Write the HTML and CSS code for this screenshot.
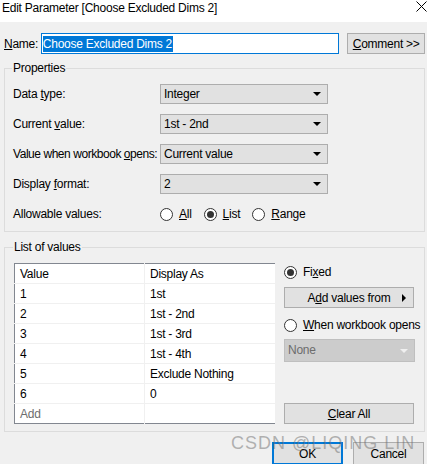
FILE: index.html
```html
<!DOCTYPE html>
<html lang="en">
<head>
    <meta charset="UTF-8">
    <title>Edit Parameter</title>
    <link rel="stylesheet" href="styles.css">
</head>
<body>
    <div class="titlebar">
        <span class="title">Edit Parameter [Choose Excluded Dims 2]</span>
        <svg class="close" width="11" height="11" viewBox="0 0 11 11">
            <path d="M0.5 0.5L10.5 10.5M10.5 0.5L0.5 10.5" stroke="#000" stroke-width="1" fill="none"/>
        </svg>
    </div>

    <div class="content">
        <div class="name-row">
            <span class="name-label"><u>N</u>ame:</span>
            <div class="name-input"><span class="selected">Choose Excluded Dims 2</span></div>
            <button class="btn comment"><u>C</u>omment &gt;&gt;</button>
        </div>

        <fieldset class="group properties">
            <legend>Properties</legend>
            <div class="prop-row">
                <span class="prop-label">Data <u>t</u>ype:</span>
                <div class="select">Integer<span class="arrow"></span></div>
            </div>
            <div class="prop-row">
                <span class="prop-label">Current <u>v</u>alue:</span>
                <div class="select">1st - 2nd<span class="arrow"></span></div>
            </div>
            <div class="prop-row">
                <span class="prop-label tight">Value when workbook <u>o</u>pens:</span>
                <div class="select">Current value<span class="arrow"></span></div>
            </div>
            <div class="prop-row">
                <span class="prop-label">Display <u>f</u>ormat:</span>
                <div class="select">2<span class="arrow"></span></div>
            </div>
            <div class="prop-row">
                <span class="prop-label">Allowable values:</span>
                <div class="radios">
                    <span class="radio"><span class="circle"></span><u>A</u>ll</span>
                    <span class="radio"><span class="circle checked"></span><u>L</u>ist</span>
                    <span class="radio"><span class="circle"></span><u>R</u>ange</span>
                </div>
            </div>
        </fieldset>

        <fieldset class="group values">
            <legend>List of values</legend>
            <div class="values-body">
                <table class="value-table">
                    <tr><td>Value</td><td>Display As</td></tr>
                    <tr><td>1</td><td>1st</td></tr>
                    <tr><td>2</td><td>1st - 2nd</td></tr>
                    <tr><td>3</td><td>1st - 3rd</td></tr>
                    <tr><td>4</td><td>1st - 4th</td></tr>
                    <tr><td>5</td><td>Exclude Nothing</td></tr>
                    <tr><td>6</td><td>0</td></tr>
                    <tr><td class="add">Add</td><td></td></tr>
                </table>
                <div class="side">
                    <span class="radio side-radio"><span class="circle checked"></span>Fi<u>x</u>ed</span>
                    <button class="btn add-from">A<u>d</u>d values from<span class="tri"></span></button>
                    <span class="radio side-radio when"><span class="circle"></span><u>W</u>hen workbook opens</span>
                    <div class="select disabled">None<span class="arrow"></span></div>
                    <button class="btn clear"><u>C</u>lear All</button>
                </div>
            </div>
        </fieldset>

        <div class="footer">
            <button class="btn ok">OK</button>
            <button class="btn cancel">Cancel</button>
            <span class="watermark">CSDN @LIQING LIN</span>
        </div>
    </div>
</body>
</html>
```

FILE: styles.css
```css
body {
    margin: 0;
    font-family: 'Liberation Sans', Arial, sans-serif;
    font-size: 12px;
    letter-spacing: -0.25px;
    color: #000;
    background-color: #f0f0f0;
    overflow: hidden;
}

.titlebar {
    position: relative;
    height: 22px;
    background: white;
    padding: 0 2px;
}

.title {
    line-height: 16px;
}

.close {
    position: absolute;
    right: 0;
    top: 1px;
}

.content {
    padding: 11px 2px 0 4px;
}

.btn {
    font-family: inherit;
    font-size: inherit;
    letter-spacing: inherit;
    background: #e1e1e1;
    border: 1px solid #adadad;
    padding: 0;
    color: #000;
}

/* name row */
.name-row {
    display: flex;
    align-items: center;
    height: 21px;
}

.name-label {
    width: 37px;
}

.name-input {
    width: 297px;
    height: 19px;
    border: 1px solid #0078d7;
    background: white;
    display: flex;
    align-items: center;
    padding-left: 1px;
}

.selected {
    background: #0078d7;
    color: white;
    line-height: 16px;
    padding-right: 1px;
}

.comment {
    margin-left: 8px;
    width: 78px;
    height: 21px;
}

/* group boxes */
.group {
    border: 1px solid #dcdcdc;
    margin: 6px 0 0 0;
    min-width: 0;
}

.group legend {
    padding: 0 1px;
    margin-left: -1px;
    line-height: 16px;
}

.properties {
    padding: 8px 0 7px 8px;
}

.prop-row {
    display: flex;
    align-items: center;
    height: 20px;
    margin-bottom: 10px;
}

.prop-row:last-child {
    margin-bottom: 0;
}

.prop-label {
    width: 147px;
    flex-shrink: 0;
    white-space: nowrap;
}

.prop-label.tight {
    letter-spacing: -0.45px;
}

.select {
    position: relative;
    width: 163px;
    height: 18px;
    line-height: 18px;
    padding-left: 3px;
    background: #e1e1e1;
    border: 1px solid #adadad;
}

.arrow {
    position: absolute;
    right: 6px;
    top: 7px;
    border-left: 4px solid transparent;
    border-right: 4px solid transparent;
    border-top: 4px solid #000;
}

.radios {
    display: flex;
}

.radio {
    display: flex;
    align-items: center;
    margin-right: 12px;
    white-space: nowrap;
}

.circle {
    flex-shrink: 0;
    width: 11px;
    height: 11px;
    border: 1px solid #333;
    border-radius: 50%;
    background: white;
    margin-right: 6px;
    position: relative;
}

.circle.checked::after {
    content: '';
    position: absolute;
    left: 2px;
    top: 2px;
    width: 7px;
    height: 7px;
    border-radius: 50%;
    background: #333;
}

/* list of values */
.values {
    margin-top: 7px;
    padding: 8px 10px 7px 9px;
}

.values-body {
    display: flex;
    gap: 8px;
}

.value-table {
    width: 263px;
    border: 1px solid #828790;
    border-collapse: collapse;
    background: white;
}

.value-table td {
    height: 18px;
    padding: 1px 0 0 5px;
    border-bottom: 1px solid #f0f0f0;
    border-right: 1px solid #f0f0f0;
}

.value-table td:first-child {
    width: 124px;
}

.value-table tr:last-child td {
    border-bottom: none;
}

.value-table .add {
    color: #6d6d6d;
}

.side {
    width: 130px;
    display: flex;
    flex-direction: column;
}

.side-radio {
    height: 18px;
    margin: 0;
}

.add-from {
    position: relative;
    margin-top: 6px;
    height: 21px;
}

.tri {
    position: absolute;
    right: 7px;
    top: 6px;
    border-top: 4px solid transparent;
    border-bottom: 4px solid transparent;
    border-left: 4px solid #000;
}

.when {
    margin-top: 8px;
}

.select.disabled {
    margin-top: 5px;
    width: 126px;
    height: 21px;
    line-height: 21px;
    background: #cccccc;
    border-color: #bfbfbf;
    color: #6d6d6d;
}

.select.disabled .arrow {
    top: 9px;
    border-top-color: #f0f0f0;
}

.clear {
    margin-top: auto;
    height: 21px;
}

/* footer buttons */
.footer {
    position: relative;
    display: flex;
    justify-content: flex-end;
    gap: 10px;
    margin-top: 10px;
    padding-right: 1px;
}

.ok {
    width: 71px;
    height: 23px;
    border: 2px solid #0078d7;
}

.cancel {
    width: 71px;
    height: 23px;
}

.watermark {
    position: absolute;
    left: 227px;
    top: -9px;
    font-size: 18px;
    color: rgba(110, 110, 110, 0.5);
    letter-spacing: 1px;
}
```
